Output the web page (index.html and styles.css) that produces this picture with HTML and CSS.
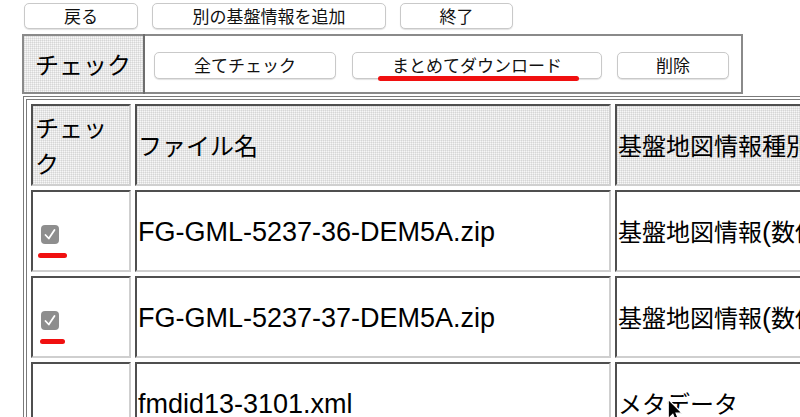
FILE: index.html
```html
<!DOCTYPE html>
<html lang="ja">
<head>
<meta charset="utf-8">
<title>基盤情報ダウンロード</title>
<link rel="stylesheet" href="styles.css">
</head>
<body>
<div class="nav">
  <button class="btn w-back">戻る</button>
  <button class="btn w-add">別の基盤情報を追加</button>
  <button class="btn w-end">終了</button>
</div>

<table class="toolbar">
  <tr>
    <td class="tb-label dots">チェック</td>
    <td class="tb-actions">
      <div class="tb-row">
        <button class="btn tb w-all">全てチェック</button>
        <button class="btn tb w-dl">まとめてダウンロード<span class="mark mark-dl"></span></button>
        <button class="btn tb w-del">削除</button>
      </div>
    </td>
  </tr>
</table>

<table class="files">
  <colgroup>
    <col class="c1"><col class="c2"><col class="c3">
  </colgroup>
  <tr class="hrow">
    <th class="dots chk-h">チェック</th>
    <th class="dots">ファイル名</th>
    <th class="dots">基盤地図情報種別</th>
  </tr>
  <tr>
    <td><span class="cb"><svg viewBox="0 0 18 19" width="18" height="19"><rect x="0" y="0" width="18" height="19" rx="4" fill="#8e8e8e"/><path d="M4.5 10 L7.8 13.5 L13.5 5" fill="none" stroke="#fff" stroke-width="1.8" stroke-linecap="round" stroke-linejoin="round"/></svg><span class="mark mark-c1"></span></span></td>
    <td><span class="latin">FG-GML-5237-36-DEM5A.zip</span></td>
    <td>基盤地図情報<span class="latin">(</span>数値標高モデル<span class="latin">)</span></td>
  </tr>
  <tr>
    <td><span class="cb"><svg viewBox="0 0 18 19" width="18" height="19"><rect x="0" y="0" width="18" height="19" rx="4" fill="#8e8e8e"/><path d="M4.5 10 L7.8 13.5 L13.5 5" fill="none" stroke="#fff" stroke-width="1.8" stroke-linecap="round" stroke-linejoin="round"/></svg><span class="mark mark-c2"></span></span></td>
    <td><span class="latin">FG-GML-5237-37-DEM5A.zip</span></td>
    <td>基盤地図情報<span class="latin">(</span>数値標高モデル<span class="latin">)</span></td>
  </tr>
  <tr>
    <td></td>
    <td><span class="latin">fmdid13-3101.xml</span></td>
    <td>メタデータ</td>
  </tr>
</table>

<svg class="cursor" viewBox="0 0 14 22" width="17" height="27"><path d="M1 1 L1 17 L4.8 13.4 L7.6 20 L10.2 18.9 L7.5 12.4 L12.6 12.4 Z" fill="#000" stroke="#fff" stroke-width="1"/></svg>
</body>
</html>
```

FILE: styles.css
```css
html, body {
  margin: 0;
  padding: 0;
  overflow: hidden;
  background: #fff;
}
body {
  width: 800px;
  height: 417px;
  position: relative;
  font-family: "Liberation Sans", "Noto Sans CJK JP", sans-serif;
  color: #000;
}

.nav {
  display: flex;
  gap: 14px;
  padding: 3px 0 0 24px;
}

.btn {
  position: relative;
  height: 26px;
  padding: 0;
  font-family: "Noto Sans CJK JP", sans-serif;
  font-size: 17px;
  line-height: 24px;
  color: #111;
  background: #fff;
  border: 1px solid #c9c9c9;
  border-radius: 5px;
  box-shadow: 0 1px 1px rgba(0, 0, 0, 0.12);
}
.w-back { width: 114px; }
.w-add { width: 234px; }
.w-end { width: 113px; }

.toolbar {
  margin: 5px 0 0 22px;
  width: 721px;
  height: 60px;
  border: 2px solid #8a8a8a;
  border-collapse: collapse;
}
.toolbar td {
  padding: 0;
}
.tb-label {
  width: 121px;
  padding-left: 11px !important;
  font-family: "Noto Sans CJK JP", sans-serif;
  font-size: 24px;
  line-height: 30px;
  border-right: 2px solid #6e6e6e;
  box-sizing: border-box;
}
.tb-actions {
  padding-left: 9px !important;
}
.tb-row {
  display: flex;
  align-items: center;
  gap: 16px;
  padding-top: 2px;
}
.btn.tb {
  height: 27px;
}
.w-all { width: 182px; }
.w-dl { width: 250px; }
.w-del { width: 112px; margin-left: -1px; }

.dots {
  background-color: #f7f7f7;
  background-image:
    linear-gradient(90deg, rgba(0, 0, 0, 0.07) 1px, transparent 1px),
    linear-gradient(rgba(0, 0, 0, 0.07) 1px, transparent 1px);
  background-size: 2px 2px;
}

.files {
  margin: 2px 0 0 23px;
  border: 4px double #7a7a7a;
  border-spacing: 4px;
  table-layout: fixed;
  width: 1020px;
}
.c1 { width: 100px; }
.c2 { width: 476px; }
.c3 { width: 430px; }

.files th,
.files td {
  height: 82px;
  box-sizing: border-box;
  padding: 0 1px;
  border-style: solid;
  border-width: 2px;
  border-color: #4f4f4f #cfcfcf #cfcfcf #4f4f4f;
  font-family: "Noto Sans CJK JP", sans-serif;
  font-size: 24px;
  font-weight: normal;
  line-height: 36px;
  text-align: left;
  vertical-align: middle;
  white-space: nowrap;
  overflow: hidden;
}
.files th.chk-h {
  white-space: normal;
  padding-left: 2px;
}

.latin {
  font-family: "Liberation Sans", sans-serif;
  font-size: 27px;
}

.cb {
  position: relative;
  display: inline-block;
  width: 18px;
  height: 19px;
  margin-left: 7px;
  vertical-align: middle;
}
.cb svg {
  display: block;
}

.mark {
  position: absolute;
  height: 5px;
  border-radius: 3px;
  background: #f01010;
}
.mark-dl {
  left: 25px;
  top: 23px;
  width: 201px;
}
.mark-c1 {
  left: -3px;
  top: 28px;
  width: 29px;
}
.mark-c2 {
  left: -1px;
  top: 28px;
  width: 25px;
}

.cursor {
  position: absolute;
  left: 667px;
  top: 398px;
}
```
